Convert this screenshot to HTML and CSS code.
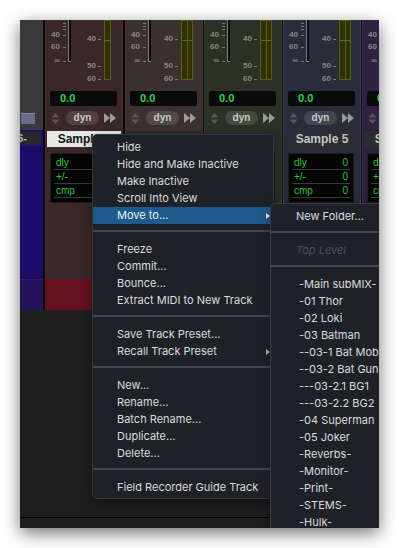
FILE: index.html
```html
<!DOCTYPE html>
<html>
<head>
<meta charset="utf-8">
<title>Mixer menu</title>
<link rel="stylesheet" href="styles.css">
</head>
<body>
<div class="win">
  <div class="mixer">
    <div class="edge">
      <div class="edge-top"><div class="folder"></div></div>
      <div class="edge-name"><span>-Aux 6-</span></div>
      <div class="edge-body"></div>
      <div class="edge-band"></div>
    </div>

    <div class="strip s1">
      <div class="meters">
        <div class="scale-l"><i class="t t1"></i><i class="t t2"></i><i class="t t3"></i><span class="lb l40">40<b></b></span><span class="lb l60">60<b></b></span><span class="lb linf">∞<b></b></span></div>
        <div class="fader"></div>
        <div class="scale-r"><span class="lb r40">40<b></b></span><span class="lb r50">50<b></b></span><span class="lb r60">60<b></b></span></div>
        <div class="meter mono"><div class="bar"></div></div>
      </div>
      <div class="disp">0.0</div>
      <div class="ctrl">
        <svg class="updn" viewBox="0 0 9 13"><path d="M0.5 5.5 L4.5 1 L8.5 5.5 Z M0.5 7.5 L8.5 7.5 L4.5 12 Z"/></svg>
        <span class="dyn">dyn</span>
        <svg class="ff" viewBox="0 0 13 12"><path d="M0 1 L6 6 L0 11 Z M6 1 L12 6 L6 11 Z M0 5.5 H7 V6.5 H0 Z"/></svg>
      </div>
      <div class="name sel">Sample 2</div>
      <div class="ins">
        <div class="row"><span>dly</span><span>0</span></div>
        <div class="row"><span>+/-</span><span>0</span></div>
        <div class="row"><span>cmp</span><span>0</span></div>
      </div>
      <div class="fill"></div>
      <div class="band"></div>
    </div>

    <div class="strip s2">
      <div class="meters">
        <div class="scale-l"><i class="t t1"></i><i class="t t2"></i><i class="t t3"></i><span class="lb l40">40<b></b></span><span class="lb l60">60<b></b></span><span class="lb linf">∞<b></b></span></div>
        <div class="fader"></div>
        <div class="scale-r"><span class="lb r40">40<b></b></span><span class="lb r50">50<b></b></span><span class="lb r60">60<b></b></span></div>
        <div class="meter stereo"><div class="bar"></div><div class="bar"></div></div>
      </div>
      <div class="disp">0.0</div>
      <div class="ctrl">
        <svg class="updn" viewBox="0 0 9 13"><path d="M0.5 5.5 L4.5 1 L8.5 5.5 Z M0.5 7.5 L8.5 7.5 L4.5 12 Z"/></svg>
        <span class="dyn">dyn</span>
        <svg class="ff" viewBox="0 0 13 12"><path d="M0 1 L6 6 L0 11 Z M6 1 L12 6 L6 11 Z M0 5.5 H7 V6.5 H0 Z"/></svg>
      </div>
      <div class="name">Sample 3</div>
      <div class="ins">
        <div class="row"><span>dly</span><span>0</span></div>
        <div class="row"><span>+/-</span><span>0</span></div>
        <div class="row"><span>cmp</span><span>0</span></div>
      </div>
      <div class="fill"></div>
      <div class="band"></div>
    </div>

    <div class="strip s3">
      <div class="meters">
        <div class="scale-l"><i class="t t1"></i><i class="t t2"></i><i class="t t3"></i><span class="lb l40">40<b></b></span><span class="lb l60">60<b></b></span><span class="lb linf">∞<b></b></span></div>
        <div class="fader"></div>
        <div class="scale-r"><span class="lb r40">40<b></b></span><span class="lb r50">50<b></b></span><span class="lb r60">60<b></b></span></div>
        <div class="meter stereo"><div class="bar"></div><div class="bar"></div></div>
      </div>
      <div class="disp">0.0</div>
      <div class="ctrl">
        <svg class="updn" viewBox="0 0 9 13"><path d="M0.5 5.5 L4.5 1 L8.5 5.5 Z M0.5 7.5 L8.5 7.5 L4.5 12 Z"/></svg>
        <span class="dyn">dyn</span>
        <svg class="ff" viewBox="0 0 13 12"><path d="M0 1 L6 6 L0 11 Z M6 1 L12 6 L6 11 Z M0 5.5 H7 V6.5 H0 Z"/></svg>
      </div>
      <div class="name">Sample 4</div>
      <div class="ins">
        <div class="row"><span>dly</span><span>0</span></div>
        <div class="row"><span>+/-</span><span>0</span></div>
        <div class="row"><span>cmp</span><span>0</span></div>
      </div>
      <div class="fill"></div>
      <div class="band"></div>
    </div>

    <div class="strip s4">
      <div class="meters">
        <div class="scale-l"><i class="t t1"></i><i class="t t2"></i><i class="t t3"></i><span class="lb l40">40<b></b></span><span class="lb l60">60<b></b></span><span class="lb linf">∞<b></b></span></div>
        <div class="fader"></div>
        <div class="scale-r"><span class="lb r40">40<b></b></span><span class="lb r50">50<b></b></span><span class="lb r60">60<b></b></span></div>
        <div class="meter stereo"><div class="bar"></div><div class="bar"></div></div>
      </div>
      <div class="disp">0.0</div>
      <div class="ctrl">
        <svg class="updn" viewBox="0 0 9 13"><path d="M0.5 5.5 L4.5 1 L8.5 5.5 Z M0.5 7.5 L8.5 7.5 L4.5 12 Z"/></svg>
        <span class="dyn">dyn</span>
        <svg class="ff" viewBox="0 0 13 12"><path d="M0 1 L6 6 L0 11 Z M6 1 L12 6 L6 11 Z M0 5.5 H7 V6.5 H0 Z"/></svg>
      </div>
      <div class="name">Sample 5</div>
      <div class="ins">
        <div class="row"><span>dly</span><span>0</span></div>
        <div class="row"><span>+/-</span><span>0</span></div>
        <div class="row"><span>cmp</span><span>0</span></div>
      </div>
      <div class="fill"></div>
      <div class="band"></div>
    </div>

    <div class="strip s5">
      <div class="meters">
        <div class="scale-l"><i class="t t1"></i><i class="t t2"></i><i class="t t3"></i><span class="lb l40">40<b></b></span><span class="lb l60">60<b></b></span><span class="lb linf">∞<b></b></span></div>
        <div class="fader"></div>
        <div class="scale-r"><span class="lb r40">40<b></b></span><span class="lb r50">50<b></b></span><span class="lb r60">60<b></b></span></div>
        <div class="meter stereo"><div class="bar"></div><div class="bar"></div></div>
      </div>
      <div class="disp">0.0</div>
      <div class="ctrl">
        <svg class="updn" viewBox="0 0 9 13"><path d="M0.5 5.5 L4.5 1 L8.5 5.5 Z M0.5 7.5 L8.5 7.5 L4.5 12 Z"/></svg>
        <span class="dyn">dyn</span>
        <svg class="ff" viewBox="0 0 13 12"><path d="M0 1 L6 6 L0 11 Z M6 1 L12 6 L6 11 Z M0 5.5 H7 V6.5 H0 Z"/></svg>
      </div>
      <div class="name">Sample 6</div>
      <div class="ins">
        <div class="row"><span>dly</span><span>0</span></div>
        <div class="row"><span>+/-</span><span>0</span></div>
        <div class="row"><span>cmp</span><span>0</span></div>
      </div>
      <div class="fill"></div>
      <div class="band"></div>
    </div>
  </div>

  <div class="floor"><div class="floor-line"></div></div>

  <div class="menu main-menu">
    <div class="item">Hide</div>
    <div class="item">Hide and Make Inactive</div>
    <div class="item">Make Inactive</div>
    <div class="item">Scroll Into View</div>
    <div class="item hl">Move to...<i class="arr"></i></div>
    <div class="sep"></div>
    <div class="item">Freeze</div>
    <div class="item">Commit...</div>
    <div class="item">Bounce...</div>
    <div class="item">Extract MIDI to New Track</div>
    <div class="sep"></div>
    <div class="item">Save Track Preset...</div>
    <div class="item">Recall Track Preset<i class="arr dim"></i></div>
    <div class="sep"></div>
    <div class="item">New...</div>
    <div class="item">Rename...</div>
    <div class="item">Batch Rename...</div>
    <div class="item">Duplicate...</div>
    <div class="item">Delete...</div>
    <div class="sep"></div>
    <div class="item">Field Recorder Guide Track</div>
  </div>

  <div class="menu sub-menu">
    <div class="item">New Folder...</div>
    <div class="sep"></div>
    <div class="item off">Top Level</div>
    <div class="sep"></div>
    <div class="item trk">-Main subMIX-</div>
    <div class="item trk">-01 Thor</div>
    <div class="item trk">-02 Loki</div>
    <div class="item trk">-03 Batman</div>
    <div class="item trk">--03-1 Bat Mobile</div>
    <div class="item trk">--03-2 Bat Guns</div>
    <div class="item trk">---03-2.1 BG1</div>
    <div class="item trk">---03-2.2 BG2</div>
    <div class="item trk">-04 Superman</div>
    <div class="item trk">-05 Joker</div>
    <div class="item trk">-Reverbs-</div>
    <div class="item trk">-Monitor-</div>
    <div class="item trk">-Print-</div>
    <div class="item trk">-STEMS-</div>
    <div class="item trk">-Hulk-</div>
    <div class="item trk">-Avengers-</div>
  </div>
</div>
</body>
</html>
```

FILE: styles.css
```css
* { box-sizing: border-box; margin: 0; padding: 0; }
html, body { background: #ffffff; }
body { padding: 20px; font-family: "Liberation Sans", Arial, sans-serif; }

.win {
  position: relative;
  width: 359px;
  height: 508px;
  overflow: hidden;
  background: #1e1e1f;
  box-shadow: 0 5px 16px rgba(0, 0, 0, 0.55);
  display: flex;
  flex-direction: column;
}

.mixer { display: flex; height: 290px; flex: none; background: #090909; }
.floor { flex: 1; background: #1e1e1f; padding-top: 207px; }
.floor-line { height: 1px; background: #000; }

/* left partial strip */
.edge { width: 23px; flex: none; margin-right: 2px; display: flex; flex-direction: column; }
.edge-top { height: 110px; background: #3a3a3c; padding: 93px 0 0 1px; }
.folder { width: 14px; height: 11px; background: #6b6b8b; border-radius: 1px; border-top: 1px solid #8585a5; }
.edge-name {
  height: 17px; background: #28282a; border: 2px solid #1d0c7a; border-left: none;
  display: flex; justify-content: flex-end; align-items: center; overflow: hidden;
  padding-right: 14px; white-space: nowrap;
  font: bold 11px/13px "Liberation Sans", Arial, sans-serif; color: #b8b8b8;
}
.edge-body { flex: 1; background: #1b0a68; }
.edge-band { height: 31px; background: #23125a; border-top: 1px solid #2d2060; }

/* strips */
.strip {
  width: 78px; flex: none; margin-right: 1px;
  display: flex; flex-direction: column;
  background: var(--bg);
  box-shadow: inset 1px 0 0 var(--edge), inset -1px 0 0 var(--edge);
}
.s1 { --bg: #3a2727; --edge: #4c2a2a; --band: #65101f; margin-right: 2px; }
.s2 { --bg: #3b3130; --edge: #4a3030; --band: #5a1a1a; }
.s3 { --bg: #2b3125; --edge: #34402a; --band: #2a4a1a; }
.s4 { --bg: #292d3a; --edge: #35405a; --band: #1a2a5a; }
.s5 { --bg: #2e2240; --edge: #3e2c5a; --band: #3a1a6a; }

.meters { height: 71px; flex: none; display: flex; padding-left: 7px; }
.scale-l { width: 16px; display: flex; flex-direction: column; align-items: flex-end; }
.t { display: block; width: 3px; height: 1px; background: #7a7a7a; margin-right: 2px; }
.t1 { margin-top: 3px; }
.t2, .t3 { margin-top: 2px; }
.lb {
  display: flex; align-items: center; height: 8px;
  font: bold 8px/8px "Liberation Sans", Arial, sans-serif; color: #888888;
}
.lb b { display: block; width: 3px; height: 1px; background: #7a7a7a; margin-left: 2px; }
.scale-l .lb b { margin-right: 2px; margin-left: 3px; }
.l40 { margin-top: 1px; }
.l60 { margin-top: 4px; }
.linf { margin-top: 6px; }

.fader { width: 3px; height: 42px; background: #0b0b0b; border-left: 1px solid #7c7c7c; border-bottom: 1px solid #7c7c7c; }

.scale-r { flex: 1; display: flex; flex-direction: column; align-items: flex-end; padding-right: 3px; }
.r40 { margin-top: 15px; }
.r50 { margin-top: 19px; }
.r60 { margin-top: 5px; }

.meter { height: 60px; display: flex; }
.meter.mono { width: 7px; margin-right: 12px; }
.meter.stereo { width: 12px; margin-right: 10px; }
.bar {
  flex: 1;
  background: linear-gradient(to bottom, transparent 19px, #4a7812 19px, #4a7812 20px, transparent 20px), #2f3004;
  border: 1px solid #56600f;
}
.stereo .bar + .bar { border-left: none; }

.disp {
  height: 15px; margin: 0 6px 0 5px; flex: none;
  background: #0a0a0a; border-radius: 2px;
  padding-left: 10px;
  font: bold 11px/15px "Liberation Sans", Arial, sans-serif; color: #33d24e;
}

.ctrl { height: 14px; margin-top: 5px; flex: none; display: flex; align-items: center; padding-left: 6px; }
.updn { width: 9px; height: 13px; fill: #5c5454; }
.dyn {
  width: 33px; height: 14px; margin-left: 6px; border-radius: 7px;
  background: rgba(255, 255, 255, 0.12);
  font: bold 10px/14px "Liberation Sans", Arial, sans-serif; color: #c8c8c8; text-align: center;
}
.ff { width: 13px; height: 12px; margin-left: 5px; fill: #9a9a9a; }

.name {
  height: 16px; margin: 6px 2px 0; flex: none;
  background: #2c2d33; color: #c4c4c4;
  font: bold 12px/16px "Liberation Sans", Arial, sans-serif; text-align: center; white-space: nowrap; overflow: hidden;
}
.name.sel { background: #e8e8e8; color: #111; }

.ins {
  margin: 6px 7px 0 5px; flex: none;
  background: #050505; border: 1px solid #1d1d1d;
  padding: 2px 3px 4px;
}
.row {
  height: 14px; display: flex; justify-content: space-between; padding: 0 2px;
  border-bottom: 1px solid #3a3a3a;
  font: 10px/13px "Liberation Sans", Arial, sans-serif; color: #2fc43d;
}
.fill { flex: 1; }
.band { height: 31px; flex: none; background: var(--band); }

/* menus */
.menu {
  position: absolute;
  background: #1f2129;
  border: 1px solid #34363e;
  box-shadow: 0 4px 12px rgba(0, 0, 0, 0.35);
  font-family: Inter, "Liberation Sans", Arial, sans-serif;
  font-size: 11px;
  color: #dcdcdc;
}
.main-menu { left: 72px; top: 114px; width: 182px; padding: 4px 0 2px; border-radius: 5px; }
.sub-menu { left: 250px; top: 183px; width: 140px; padding: 4px 0; border-radius: 5px 0 0 0; border-color: #3a3d46; }
.item { height: 17px; line-height: 17px; padding-left: 24px; display: flex; align-items: center; justify-content: space-between; padding-right: 3px; white-space: nowrap; }
.item.hl { background: #1e5a8c; color: #f0f0f0; }
.arr { display: block; width: 0; height: 0; border-left: 4px solid #e6e6e6; border-top: 3px solid transparent; border-bottom: 3px solid transparent; }
.arr.dim { border-left-color: #b0b0b0; }
.sep { height: 2px; background: #46474c; margin: 6px 0 9px; }
.sub-menu .item { padding-left: 25px; }
.sub-menu .item.trk { padding-left: 28px; }
.item.off { color: #505156; font-style: italic; }
```
